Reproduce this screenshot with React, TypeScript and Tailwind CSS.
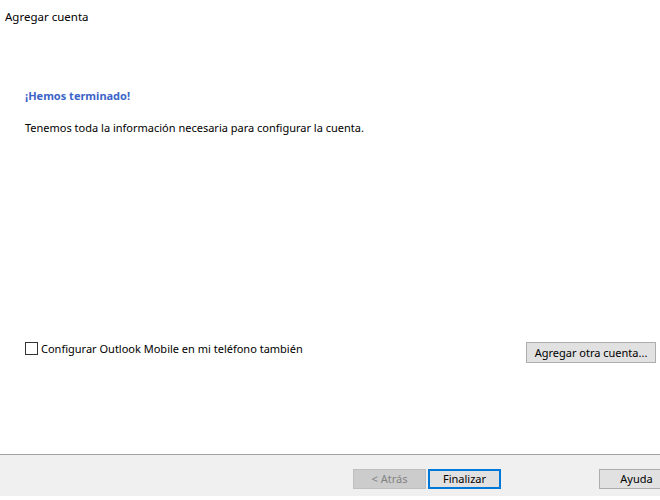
export default function App() {
  return (
    <div
      className="w-[660px] h-[500px] bg-white flex flex-col text-[11px] text-black overflow-hidden"
      style={{ fontFamily: '"Segoe UI", "Noto Sans", "Open Sans", sans-serif' }}
    >
      <div className="pl-[5px] pt-[9px] leading-[16px] h-[30px] text-[11.5px]">Agregar cuenta</div>
      <div className="flex-1 flex flex-col pl-[25px]">
        <div className="mt-[58px] leading-[16px] font-bold text-[#3c64c8]">¡Hemos terminado!</div>
        <div className="mt-[16px] leading-[16px]">Tenemos toda la información necesaria para configurar la cuenta.</div>
        <div className="mt-[206px] flex items-start justify-between pr-[4px]">
          <label className="flex items-start gap-[3px] leading-[16px]">
            <span className="w-[13px] h-[13px] border border-[#333333] bg-white block" />
            <span className="-mt-[1px]">Configurar Outlook Mobile en mi teléfono también</span>
          </label>
          <button className="h-[21px] w-[130px] border border-[#adadad] bg-[#e1e1e1] leading-[19px]">
            Agregar otra cuenta...
          </button>
        </div>
      </div>
      <div className="h-[42px] border-t border-[#a0a0a0] bg-[#f0f0f0] flex items-start pt-[14px] pl-[353px] mb-[4px]">
        <button className="shrink-0 h-[20px] w-[73px] border border-[#bfbfbf] bg-[#cccccc] text-[#838383] leading-[18px]">
          &lt; Atrás
        </button>
        <button className="shrink-0 ml-[2px] h-[20px] w-[73px] border-2 border-[#0078d7] bg-[#e1e1e1] leading-[16px]">
          Finalizar
        </button>
        <button className="shrink-0 ml-[98px] h-[20px] w-[75px] border border-[#adadad] bg-[#e1e1e1] leading-[18px]">
          Ayuda
        </button>
      </div>
    </div>
  );
}
